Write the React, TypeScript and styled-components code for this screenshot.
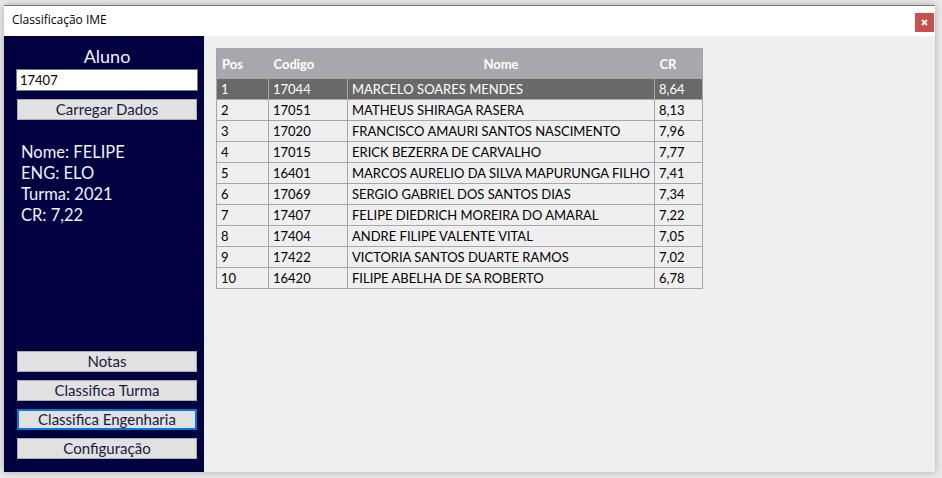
import React from "react";
import styled, { createGlobalStyle } from "styled-components";

const Global = createGlobalStyle`
  html, body { margin: 0; padding: 0; background: #e9e9e9; }
  body { width: 942px; height: 478px; overflow: hidden; }
  * { box-sizing: border-box; }
`;

const FONT = `"Lato", "DejaVu Sans", sans-serif`;

const Window = styled.div`
  margin: 5px 0 0 4px;
  width: 931px;
  height: 467px;
  display: flex;
  flex-direction: column;
  background: #efefef;
  border-top: 1px solid #7a7a7a;
  box-shadow: 0 0 7px rgba(0, 0, 0, 0.28);
`;

const TitleBar = styled.div`
  height: 30px;
  flex: none;
  background: #ffffff;
  display: flex;
  align-items: flex-start;
  justify-content: space-between;
  padding-left: 8px;
`;

const Title = styled.span`
  font-family: "Open Sans", "Noto Sans", sans-serif;
  font-size: 12px;
  line-height: 28px;
  color: #000;
`;

const CloseButton = styled.div`
  width: 19px;
  height: 19px;
  margin: 7px 1px 0 0;
  background: #c75050;
  display: flex;
  align-items: center;
  justify-content: center;
`;

const Body = styled.div`
  flex: 1;
  display: flex;
  min-height: 0;
`;

const Sidebar = styled.div`
  width: 200px;
  flex: none;
  background: #000040;
  display: flex;
  flex-direction: column;
  padding: 9px 0 13px 12px;
`;

const Label = styled.div`
  width: 182px;
  text-align: center;
  font-family: ${FONT};
  font-size: 18px;
  line-height: 22px;
  color: #f2f2ff;
`;

const Input = styled.input`
  margin-top: 2px;
  width: 182px;
  height: 22px;
  border: 1px solid #7a7a7a;
  background: #fff;
  padding: 0 3px;
  font-family: ${FONT};
  font-size: 13px;
  color: #000;
  outline: none;
`;

const Button = styled.button<{ $focused?: boolean }>`
  width: 180px;
  height: 21px;
  margin-left: 1px;
  padding: 0;
  background: #e1e1e1;
  border: ${(p) => (p.$focused ? "2px solid #0078d7" : "1px solid #adadad")};
  font-family: ${FONT};
  font-size: 15px;
  line-height: 17px;
  color: #1a1a40;
  cursor: pointer;
`;

const LoadButton = styled(Button)`
  margin-top: 8px;
`;

const Info = styled.div`
  margin-top: 22px;
  padding-left: 5px;
  display: flex;
  flex-direction: column;
`;

const InfoLine = styled.div`
  font-family: ${FONT};
  font-size: 16.5px;
  line-height: 21px;
  color: #f2f2ff;
`;

const Spacer = styled.div`
  flex: 1;
`;

const ButtonStack = styled.div`
  display: flex;
  flex-direction: column;
  gap: 8px;
`;

const Main = styled.div`
  flex: 1;
  padding: 12px 0 0 12px;
  background: #efefef;
`;

const Table = styled.table`
  border-collapse: collapse;
  font-family: ${FONT};
  font-size: 13px;
  border: 1px solid #a7a7ab;
`;

const HeadCell = styled.th<{ $w: number; $center?: boolean }>`
  width: ${(p) => p.$w}px;
  height: 30px;
  padding: 0 5px;
  background: #a8a9ae;
  color: #ffffff;
  font-weight: 700;
  text-align: ${(p) => (p.$center ? "center" : "left")};
  border: none;
`;

const Row = styled.tr<{ $selected?: boolean }>`
  background: ${(p) => (p.$selected ? "#696969" : "#efefef")};
  color: ${(p) => (p.$selected ? "#ffffff" : "#000000")};
`;

const Cell = styled.td`
  height: 21px;
  padding: 0 4px;
  border: 1px solid #a7a7ab;
  white-space: nowrap;
  line-height: 19px;
`;

const rows: [number, string, string, string][] = [
  [1, "17044", "MARCELO SOARES MENDES", "8,64"],
  [2, "17051", "MATHEUS SHIRAGA RASERA", "8,13"],
  [3, "17020", "FRANCISCO AMAURI SANTOS NASCIMENTO", "7,96"],
  [4, "17015", "ERICK BEZERRA DE CARVALHO", "7,77"],
  [5, "16401", "MARCOS AURELIO DA SILVA MAPURUNGA FILHO", "7,41"],
  [6, "17069", "SERGIO GABRIEL DOS SANTOS DIAS", "7,34"],
  [7, "17407", "FELIPE DIEDRICH MOREIRA DO AMARAL", "7,22"],
  [8, "17404", "ANDRE FILIPE VALENTE VITAL", "7,05"],
  [9, "17422", "VICTORIA SANTOS DUARTE RAMOS", "7,02"],
  [10, "16420", "FILIPE ABELHA DE SA ROBERTO", "6,78"],
];

export default function App() {
  return (
    <>
      <Global />
      <Window>
        <TitleBar>
          <Title>Classificação IME</Title>
          <CloseButton>
            <svg width="7" height="7" viewBox="0 0 7 7">
              <path d="M1 1 L6 6 M6 1 L1 6" stroke="#fff" strokeWidth="1.8" />
            </svg>
          </CloseButton>
        </TitleBar>
        <Body>
          <Sidebar>
            <Label>Aluno</Label>
            <Input defaultValue="17407" />
            <LoadButton>Carregar Dados</LoadButton>
            <Info>
              <InfoLine>Nome: FELIPE</InfoLine>
              <InfoLine>ENG: ELO</InfoLine>
              <InfoLine>Turma: 2021</InfoLine>
              <InfoLine>CR: 7,22</InfoLine>
            </Info>
            <Spacer />
            <ButtonStack>
              <Button>Notas</Button>
              <Button>Classifica Turma</Button>
              <Button $focused>Classifica Engenharia</Button>
              <Button>Configuração</Button>
            </ButtonStack>
          </Sidebar>
          <Main>
            <Table>
              <thead>
                <tr>
                  <HeadCell $w={52}>Pos</HeadCell>
                  <HeadCell $w={79}>Codigo</HeadCell>
                  <HeadCell $w={306} $center>
                    Nome
                  </HeadCell>
                  <HeadCell $w={48}>CR</HeadCell>
                </tr>
              </thead>
              <tbody>
                {rows.map((r) => (
                  <Row key={r[0]} $selected={r[0] === 1}>
                    <Cell>{r[0]}</Cell>
                    <Cell>{r[1]}</Cell>
                    <Cell>{r[2]}</Cell>
                    <Cell>{r[3]}</Cell>
                  </Row>
                ))}
              </tbody>
            </Table>
          </Main>
        </Body>
      </Window>
    </>
  );
}
